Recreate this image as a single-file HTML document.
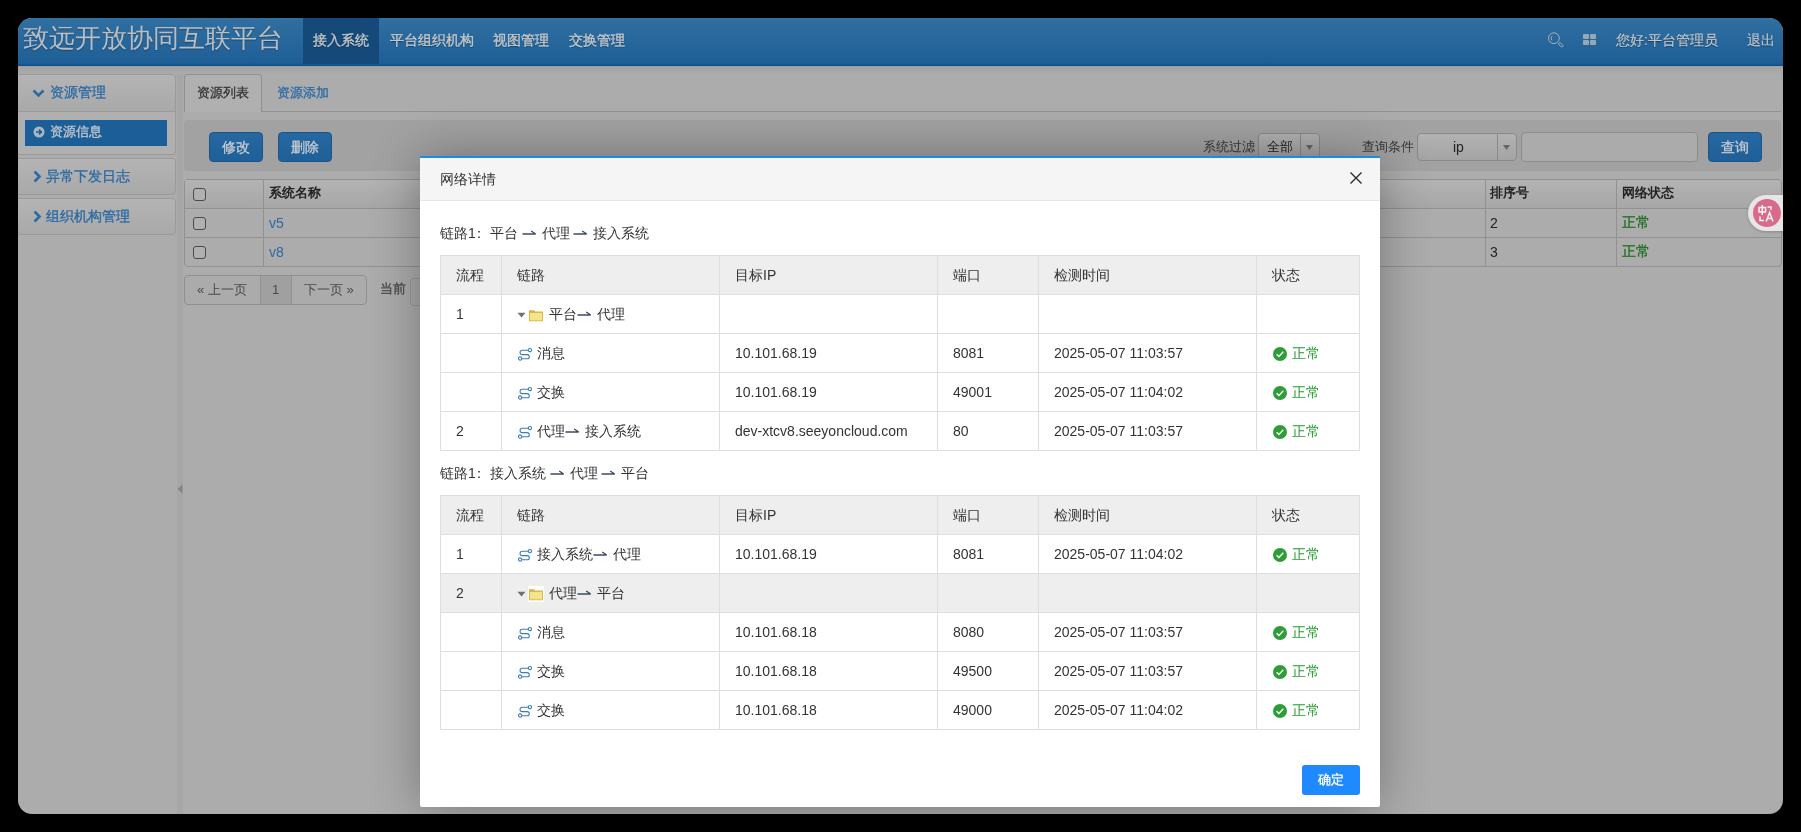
<!DOCTYPE html><html><head><meta charset="utf-8"><style>
*{box-sizing:border-box;margin:0;padding:0}
html,body{width:1801px;height:832px;overflow:hidden;background:#000;font-family:"Liberation Sans",sans-serif;}
.win{position:absolute;left:18px;top:18px;width:1765px;height:796px;border-radius:14px;overflow:hidden;background:#acacac}
.pg{position:absolute;left:-18px;top:-18px;width:1801px;height:832px;will-change:transform}
.a{position:absolute;white-space:nowrap}
.t14{font-size:14px;line-height:20px}
.t13{font-size:13px;line-height:20px}
.topbar{left:0;top:18px;width:1801px;height:48px;background:linear-gradient(#306fa0,#1e5f97 95%,#17558c);border-bottom:1px solid #0e4d86}
.title{left:23px;top:20px;font-size:26px;line-height:36px;color:#b9bdc2;text-shadow:0 1px 1px rgba(0,0,0,.3)}
.navact{left:303px;top:18px;width:76px;height:46px;background:#14497a}
.nav{top:30px;color:#c3c7cb;text-shadow:0 1px 1px rgba(0,0,0,.4);-webkit-text-stroke:0.35px #c3c7cb}
.sb{-webkit-text-stroke:0.3px currentColor}
.panel{left:8px;width:168px;border:1px solid #9b9b9b;border-radius:4px;background:#b0b0b0}
.phead{background:linear-gradient(#b4b4b4,#a9a9a9)}
.blue{color:#2a6aa5}
.btn{border:1px solid #1b5688;border-radius:4px;background:linear-gradient(#2668a2,#205f97);color:#c8ccd0;text-align:center;-webkit-text-stroke:0.3px #c8ccd0}
.sel{border:1px solid #8a8a8a;border-radius:4px;background:linear-gradient(#b2b2b2,#a4a4a4)}
.mt{color:#333}
.line{position:absolute;background:#dedede}
</style></head><body>
<div class="win"><div class="pg">
<div class="a topbar"></div>
<div class="a title">致远开放协同互联平台</div>
<div class="a navact"></div>
<div class="a nav t14" style="left:313px">接入系统</div>
<div class="a nav t14" style="left:390px">平台组织机构</div>
<div class="a nav t14" style="left:493px">视图管理</div>
<div class="a nav t14" style="left:569px">交换管理</div>
<svg class="a" style="left:1547px;top:32px" width="17" height="16" viewBox="0 0 17 16"><g fill="none" stroke="#a3b0ba" stroke-width="1"><circle cx="6.9" cy="6.2" r="5.4"/><path d="M5 4.2A3 3 0 0 0 5 8.4" /><rect x="11.2" y="11.6" width="5.2" height="2.4" rx="1.2" transform="rotate(42 13.8 12.8)" stroke-width="0.9"/></g></svg>
<svg class="a" style="left:1583px;top:34px" width="14" height="12" viewBox="0 0 14 12"><g fill="#97a7b3"><rect x="0" y="0" width="6" height="5" rx="1"/><rect x="7" y="0" width="6" height="5" rx="1"/><rect x="0" y="6" width="6" height="5" rx="1"/><rect x="7" y="6" width="6" height="5" rx="1"/></g></svg>
<div class="a nav t14" style="left:1616px;-webkit-text-stroke:0.15px #c3c7cb">您好:平台管理员</div>
<div class="a nav t14" style="left:1747px;-webkit-text-stroke:0.15px #c3c7cb">退出</div>
<div class="a" style="left:0;top:66px;width:1801px;height:8px;background:linear-gradient(rgba(0,0,0,.06),rgba(0,0,0,0))"></div>
<div class="a panel" style="top:74px;height:81px"><div class="phead" style="height:37px;border-bottom:1px solid #9b9b9b;border-radius:4px 4px 0 0"></div></div>
<svg class="a" style="left:32px;top:89px" width="13" height="9" viewBox="0 0 13 9"><path d="M1.5 1.5l5 5 5-5" fill="none" stroke="#2a6aa5" stroke-width="2.6"/></svg>
<div class="a t14 blue sb" style="left:50px;top:82px">资源管理</div>
<div class="a" style="left:25px;top:120px;width:142px;height:26px;background:#1c5f98"></div>
<svg class="a" style="left:33px;top:126px" width="12" height="12" viewBox="0 0 12 12"><circle cx="6" cy="6" r="5.5" fill="#a9b6c2"/><path d="M3 6h5M6 3.6L8.4 6 6 8.4" fill="none" stroke="#1c5f98" stroke-width="1.6"/></svg>
<div class="a t13 sb" style="left:50px;top:122px;color:#c3c8cc">资源信息</div>
<div class="a panel phead" style="top:158px;height:37px"></div>
<svg class="a" style="left:33px;top:170px" width="9" height="13" viewBox="0 0 9 13"><path d="M1.5 1.5l5 5-5 5" fill="none" stroke="#2a6aa5" stroke-width="2.6"/></svg>
<div class="a t14 blue sb" style="left:46px;top:166px">异常下发日志</div>
<div class="a panel phead" style="top:198px;height:37px"></div>
<svg class="a" style="left:33px;top:210px" width="9" height="13" viewBox="0 0 9 13"><path d="M1.5 1.5l5 5-5 5" fill="none" stroke="#2a6aa5" stroke-width="2.6"/></svg>
<div class="a t14 blue sb" style="left:46px;top:206px">组织机构管理</div>
<div class="a" style="left:177px;top:74px;width:6px;height:758px;background:#a6a6a6"></div>
<svg class="a" style="left:177px;top:484px" width="6" height="10" viewBox="0 0 6 10"><path d="M5.5 0.5v9L0.5 5z" fill="#838383"/></svg>
<div class="a" style="left:184px;top:111px;width:1597px;height:1px;background:#919191"></div>
<div class="a" style="left:184px;top:74px;width:78px;height:38px;border:1px solid #919191;border-bottom:none;border-radius:4px 4px 0 0;background:#b0b0b0"></div>
<div class="a t13 sb" style="left:197px;top:83px;color:#333">资源列表</div>
<div class="a t13 blue sb" style="left:277px;top:83px">资源添加</div>
<div class="a" style="left:184px;top:120px;width:1597px;height:51px;background:#a2a2a2;border-radius:4px"></div>
<div class="a btn t14" style="left:209px;top:132px;width:54px;height:30px;padding-top:4px">修改</div>
<div class="a btn t14" style="left:278px;top:132px;width:54px;height:30px;padding-top:4px">删除</div>
<div class="a t13" style="left:1203px;top:137px;color:#383838">系统过滤</div>
<div class="a sel" style="left:1258px;top:133px;width:62px;height:28px"></div>
<div class="a" style="left:1300px;top:134px;width:1px;height:26px;background:#8a8a8a"></div>
<div class="a t13" style="left:1267px;top:137px;color:#222">全部</div>
<svg class="a" style="left:1306px;top:145px" width="7" height="5" viewBox="0 0 7 5"><path d="M0 0h7L3.5 5z" fill="#666"/></svg>
<div class="a t13" style="left:1362px;top:137px;color:#383838">查询条件</div>
<div class="a sel" style="left:1417px;top:133px;width:100px;height:28px"></div>
<div class="a" style="left:1497px;top:134px;width:1px;height:26px;background:#8a8a8a"></div>
<div class="a t14" style="left:1453px;top:137px;color:#222">ip</div>
<svg class="a" style="left:1503px;top:145px" width="7" height="5" viewBox="0 0 7 5"><path d="M0 0h7L3.5 5z" fill="#666"/></svg>
<div class="a" style="left:1521px;top:132px;width:177px;height:30px;border:1px solid #8c8c8c;border-radius:4px;background:#ababab"></div>
<div class="a btn t14" style="left:1708px;top:132px;width:54px;height:30px;padding-top:4px">查询</div>
<div class="a" style="left:184px;top:179px;width:1598px;height:88px;border:1px solid #919191;border-radius:4px;background:#acacac;overflow:hidden"><div style="height:29px;background:linear-gradient(#b3b3b3,#a7a7a7);border-bottom:1px solid #919191"></div><div style="height:29px;border-bottom:1px solid #919191"></div></div>
<div class="a" style="left:263px;top:180px;width:1px;height:86px;background:#919191"></div>
<div class="a" style="left:1485px;top:180px;width:1px;height:86px;background:#919191"></div>
<div class="a" style="left:1616px;top:180px;width:1px;height:86px;background:#919191"></div>
<div class="a" style="left:193px;top:188px;width:13px;height:13px;border:1px solid #4a4a4a;border-radius:3px;background:#b0b0b0"></div>
<div class="a" style="left:193px;top:217px;width:13px;height:13px;border:1px solid #4a4a4a;border-radius:3px;background:#b0b0b0"></div>
<div class="a" style="left:193px;top:246px;width:13px;height:13px;border:1px solid #4a4a4a;border-radius:3px;background:#b0b0b0"></div>
<div class="a t13" style="left:269px;top:183px;color:#222;font-weight:bold">系统名称</div>
<div class="a t13" style="left:1490px;top:183px;color:#222;font-weight:bold">排序号</div>
<div class="a t13" style="left:1622px;top:183px;color:#222;font-weight:bold">网络状态</div>
<div class="a t14 blue" style="left:269px;top:213px">v5</div>
<div class="a t14 blue" style="left:269px;top:242px">v8</div>
<div class="a t14" style="left:1490px;top:213px;color:#222">2</div>
<div class="a t14" style="left:1490px;top:242px;color:#222">3</div>
<div class="a t14 sb" style="left:1622px;top:212px;color:#1f6e22">正常</div>
<div class="a t14 sb" style="left:1622px;top:241px;color:#1f6e22">正常</div>
<div class="a" style="left:184px;top:275px;width:183px;height:30px;border:1px solid #8f8f8f;border-radius:4px;background:#ababab;overflow:hidden"><div style="position:absolute;left:75px;top:0;width:32px;height:28px;background:#a0a0a0;border-left:1px solid #8f8f8f;border-right:1px solid #8f8f8f"></div></div>
<div class="a t13" style="left:197px;top:280px;color:#4a4a4a">« 上一页</div>
<div class="a t13" style="left:272px;top:280px;color:#4a4a4a">1</div>
<div class="a t13" style="left:304px;top:280px;color:#4a4a4a">下一页 »</div>
<div class="a t13 sb" style="left:380px;top:279px;color:#4a4a4a">当前</div>
<div class="a" style="left:410px;top:278px;width:60px;height:28px;border:1px solid #9a9a9a;border-radius:4px;background:#aaaaaa"></div>
<div class="a" style="left:1748px;top:195px;width:60px;height:36px;border-radius:18px;background:#e6e6e6;box-shadow:0 1px 3px rgba(0,0,0,.2)"></div>
<svg class="a" style="left:1753px;top:199px" width="28" height="28" viewBox="0 0 28 28"><circle cx="14" cy="14" r="14" fill="#d96a8b"/><g fill="none" stroke="#f4f4f4" stroke-width="1.5"><rect x="6" y="8.5" width="6.5" height="4.5"/><path d="M9.25 6v10M14.5 8h3.5v3M7 17.5v4h4M13.2 22.5l3.4-9 3.4 9M14.3 19.5h4.6"/></g></svg>
<div class="a" style="left:420px;top:156px;width:960px;height:651px;background:#fff;border-radius:2px;box-shadow:0 0 50px rgba(0,0,0,.33)"></div>
<div class="a" style="left:420px;top:156px;width:960px;height:2px;background:#1e8ae6"></div>
<div class="a" style="left:420px;top:158px;width:960px;height:43px;background:#f5f5f5;border-bottom:1px solid #e6e6e6"></div>
<div class="a t14" style="left:440px;top:169px;color:#333">网络详情</div>
<svg class="a" style="left:1350px;top:172px" width="12" height="12" viewBox="0 0 12 12"><path d="M0.5 0.5l11 11M11.5 0.5l-11 11" stroke="#2a2a2a" stroke-width="1.35"/></svg>
<div class="a t14 mt" style="left:440px;top:223px">链路1<span style="position:relative;left:-3.5px">：</span>平台 <svg width="15" height="8" viewBox="0 0 15 8" style="vertical-align:2px;margin-right:1px"><path d="M0.5 6h13.2M9.2 3l4.5 3" fill="none" stroke="#3c4b61" stroke-width="1.4"/></svg> 代理 <svg width="15" height="8" viewBox="0 0 15 8" style="vertical-align:2px;margin-right:1px"><path d="M0.5 6h13.2M9.2 3l4.5 3" fill="none" stroke="#3c4b61" stroke-width="1.4"/></svg> 接入系统</div>
<div class="a" style="left:441px;top:256px;width:918px;height:38px;background:#eeeeee"></div>
<div class="line" style="left:440px;top:255px;width:920px;height:1px"></div>
<div class="line" style="left:440px;top:294px;width:920px;height:1px"></div>
<div class="line" style="left:440px;top:333px;width:920px;height:1px"></div>
<div class="line" style="left:440px;top:372px;width:920px;height:1px"></div>
<div class="line" style="left:440px;top:411px;width:920px;height:1px"></div>
<div class="line" style="left:440px;top:450px;width:920px;height:1px"></div>
<div class="line" style="left:440px;top:255px;width:1px;height:196px"></div>
<div class="line" style="left:501px;top:255px;width:1px;height:196px"></div>
<div class="line" style="left:719px;top:255px;width:1px;height:196px"></div>
<div class="line" style="left:937px;top:255px;width:1px;height:196px"></div>
<div class="line" style="left:1038px;top:255px;width:1px;height:196px"></div>
<div class="line" style="left:1256px;top:255px;width:1px;height:196px"></div>
<div class="line" style="left:1359px;top:255px;width:1px;height:196px"></div>
<div class="a t14 mt" style="left:456px;top:265px">流程</div>
<div class="a t14 mt" style="left:517px;top:265px">链路</div>
<div class="a t14 mt" style="left:735px;top:265px">目标IP</div>
<div class="a t14 mt" style="left:953px;top:265px">端口</div>
<div class="a t14 mt" style="left:1054px;top:265px">检测时间</div>
<div class="a t14 mt" style="left:1272px;top:265px">状态</div>
<div class="a t14 mt" style="left:456px;top:304px">1</div>
<div class="a" style="left:517px;top:312px;line-height:0"><svg width="9" height="6" viewBox="0 0 9 6"><path d="M0.5 0.8h8l-4 4.8z" fill="#6b7079"/></svg></div>
<div class="a" style="left:528px;top:307px;line-height:0"><svg width="16" height="16" viewBox="0 0 16 16" style="background:#fff"><path d="M1 3.2h5l1.2 1.2H15V14.2H1z" fill="#dab446"/><rect x="1.9" y="5.9" width="12.2" height="7.5" fill="#f6e48b"/></svg></div>
<div class="a t14 mt" style="left:549px;top:304px">平台<svg width="15" height="8" viewBox="0 0 15 8" style="vertical-align:2px;margin-right:1px"><path d="M0.5 6h13.2M9.2 3l4.5 3" fill="none" stroke="#3c4b61" stroke-width="1.4"/></svg> 代理</div>
<div class="a" style="left:517px;top:347px;line-height:0"><svg width="16" height="14" viewBox="0 0 16 14"><g fill="none" stroke="#3d7bb6" stroke-width="1.05"><circle cx="12.9" cy="3.1" r="1.65"/><circle cx="3.1" cy="11.5" r="1.65"/><path d="M11.25 3.3H5.2A2.15 2.15 0 0 0 5.2 7.6H10.2A2.1 2.1 0 0 1 10.2 11.8H4.75"/></g></svg></div>
<div class="a t14 mt" style="left:537px;top:343px">消息</div>
<div class="a t14 mt" style="left:735px;top:343px">10.101.68.19</div>
<div class="a t14 mt" style="left:953px;top:343px">8081</div>
<div class="a t14 mt" style="left:1054px;top:343px">2025-05-07 11:03:57</div>
<div class="a" style="left:1273px;top:347px;line-height:0"><svg width="14" height="14" viewBox="0 0 14 14"><circle cx="7" cy="7" r="7" fill="#2f9d37"/><path d="M3.6 7.2l2.3 2.2 4.4-4.6" fill="none" stroke="#fff" stroke-width="1.4"/></svg></div>
<div class="a t14" style="left:1292px;top:343px;color:#249a2f">正常</div>
<div class="a" style="left:517px;top:386px;line-height:0"><svg width="16" height="14" viewBox="0 0 16 14"><g fill="none" stroke="#3d7bb6" stroke-width="1.05"><circle cx="12.9" cy="3.1" r="1.65"/><circle cx="3.1" cy="11.5" r="1.65"/><path d="M11.25 3.3H5.2A2.15 2.15 0 0 0 5.2 7.6H10.2A2.1 2.1 0 0 1 10.2 11.8H4.75"/></g></svg></div>
<div class="a t14 mt" style="left:537px;top:382px">交换</div>
<div class="a t14 mt" style="left:735px;top:382px">10.101.68.19</div>
<div class="a t14 mt" style="left:953px;top:382px">49001</div>
<div class="a t14 mt" style="left:1054px;top:382px">2025-05-07 11:04:02</div>
<div class="a" style="left:1273px;top:386px;line-height:0"><svg width="14" height="14" viewBox="0 0 14 14"><circle cx="7" cy="7" r="7" fill="#2f9d37"/><path d="M3.6 7.2l2.3 2.2 4.4-4.6" fill="none" stroke="#fff" stroke-width="1.4"/></svg></div>
<div class="a t14" style="left:1292px;top:382px;color:#249a2f">正常</div>
<div class="a t14 mt" style="left:456px;top:421px">2</div>
<div class="a" style="left:517px;top:425px;line-height:0"><svg width="16" height="14" viewBox="0 0 16 14"><g fill="none" stroke="#3d7bb6" stroke-width="1.05"><circle cx="12.9" cy="3.1" r="1.65"/><circle cx="3.1" cy="11.5" r="1.65"/><path d="M11.25 3.3H5.2A2.15 2.15 0 0 0 5.2 7.6H10.2A2.1 2.1 0 0 1 10.2 11.8H4.75"/></g></svg></div>
<div class="a t14 mt" style="left:537px;top:421px">代理<svg width="15" height="8" viewBox="0 0 15 8" style="vertical-align:2px;margin-right:1px"><path d="M0.5 6h13.2M9.2 3l4.5 3" fill="none" stroke="#3c4b61" stroke-width="1.4"/></svg> 接入系统</div>
<div class="a t14 mt" style="left:735px;top:421px">dev-xtcv8.seeyoncloud.com</div>
<div class="a t14 mt" style="left:953px;top:421px">80</div>
<div class="a t14 mt" style="left:1054px;top:421px">2025-05-07 11:03:57</div>
<div class="a" style="left:1273px;top:425px;line-height:0"><svg width="14" height="14" viewBox="0 0 14 14"><circle cx="7" cy="7" r="7" fill="#2f9d37"/><path d="M3.6 7.2l2.3 2.2 4.4-4.6" fill="none" stroke="#fff" stroke-width="1.4"/></svg></div>
<div class="a t14" style="left:1292px;top:421px;color:#249a2f">正常</div>
<div class="a t14 mt" style="left:440px;top:463px">链路1<span style="position:relative;left:-3.5px">：</span>接入系统 <svg width="15" height="8" viewBox="0 0 15 8" style="vertical-align:2px;margin-right:1px"><path d="M0.5 6h13.2M9.2 3l4.5 3" fill="none" stroke="#3c4b61" stroke-width="1.4"/></svg> 代理 <svg width="15" height="8" viewBox="0 0 15 8" style="vertical-align:2px;margin-right:1px"><path d="M0.5 6h13.2M9.2 3l4.5 3" fill="none" stroke="#3c4b61" stroke-width="1.4"/></svg> 平台</div>
<div class="a" style="left:441px;top:496px;width:918px;height:38px;background:#eeeeee"></div>
<div class="a" style="left:441px;top:574px;width:918px;height:38px;background:#eeeeee"></div>
<div class="line" style="left:440px;top:495px;width:920px;height:1px"></div>
<div class="line" style="left:440px;top:534px;width:920px;height:1px"></div>
<div class="line" style="left:440px;top:573px;width:920px;height:1px"></div>
<div class="line" style="left:440px;top:612px;width:920px;height:1px"></div>
<div class="line" style="left:440px;top:651px;width:920px;height:1px"></div>
<div class="line" style="left:440px;top:690px;width:920px;height:1px"></div>
<div class="line" style="left:440px;top:729px;width:920px;height:1px"></div>
<div class="line" style="left:440px;top:495px;width:1px;height:235px"></div>
<div class="line" style="left:501px;top:495px;width:1px;height:235px"></div>
<div class="line" style="left:719px;top:495px;width:1px;height:235px"></div>
<div class="line" style="left:937px;top:495px;width:1px;height:235px"></div>
<div class="line" style="left:1038px;top:495px;width:1px;height:235px"></div>
<div class="line" style="left:1256px;top:495px;width:1px;height:235px"></div>
<div class="line" style="left:1359px;top:495px;width:1px;height:235px"></div>
<div class="a t14 mt" style="left:456px;top:505px">流程</div>
<div class="a t14 mt" style="left:517px;top:505px">链路</div>
<div class="a t14 mt" style="left:735px;top:505px">目标IP</div>
<div class="a t14 mt" style="left:953px;top:505px">端口</div>
<div class="a t14 mt" style="left:1054px;top:505px">检测时间</div>
<div class="a t14 mt" style="left:1272px;top:505px">状态</div>
<div class="a t14 mt" style="left:456px;top:544px">1</div>
<div class="a" style="left:517px;top:548px;line-height:0"><svg width="16" height="14" viewBox="0 0 16 14"><g fill="none" stroke="#3d7bb6" stroke-width="1.05"><circle cx="12.9" cy="3.1" r="1.65"/><circle cx="3.1" cy="11.5" r="1.65"/><path d="M11.25 3.3H5.2A2.15 2.15 0 0 0 5.2 7.6H10.2A2.1 2.1 0 0 1 10.2 11.8H4.75"/></g></svg></div>
<div class="a t14 mt" style="left:537px;top:544px">接入系统<svg width="15" height="8" viewBox="0 0 15 8" style="vertical-align:2px;margin-right:1px"><path d="M0.5 6h13.2M9.2 3l4.5 3" fill="none" stroke="#3c4b61" stroke-width="1.4"/></svg> 代理</div>
<div class="a t14 mt" style="left:735px;top:544px">10.101.68.19</div>
<div class="a t14 mt" style="left:953px;top:544px">8081</div>
<div class="a t14 mt" style="left:1054px;top:544px">2025-05-07 11:04:02</div>
<div class="a" style="left:1273px;top:548px;line-height:0"><svg width="14" height="14" viewBox="0 0 14 14"><circle cx="7" cy="7" r="7" fill="#2f9d37"/><path d="M3.6 7.2l2.3 2.2 4.4-4.6" fill="none" stroke="#fff" stroke-width="1.4"/></svg></div>
<div class="a t14" style="left:1292px;top:544px;color:#249a2f">正常</div>
<div class="a t14 mt" style="left:456px;top:583px">2</div>
<div class="a" style="left:517px;top:591px;line-height:0"><svg width="9" height="6" viewBox="0 0 9 6"><path d="M0.5 0.8h8l-4 4.8z" fill="#6b7079"/></svg></div>
<div class="a" style="left:528px;top:586px;line-height:0"><svg width="16" height="16" viewBox="0 0 16 16" style="background:#fff"><path d="M1 3.2h5l1.2 1.2H15V14.2H1z" fill="#dab446"/><rect x="1.9" y="5.9" width="12.2" height="7.5" fill="#f6e48b"/></svg></div>
<div class="a t14 mt" style="left:549px;top:583px">代理<svg width="15" height="8" viewBox="0 0 15 8" style="vertical-align:2px;margin-right:1px"><path d="M0.5 6h13.2M9.2 3l4.5 3" fill="none" stroke="#3c4b61" stroke-width="1.4"/></svg> 平台</div>
<div class="a" style="left:517px;top:626px;line-height:0"><svg width="16" height="14" viewBox="0 0 16 14"><g fill="none" stroke="#3d7bb6" stroke-width="1.05"><circle cx="12.9" cy="3.1" r="1.65"/><circle cx="3.1" cy="11.5" r="1.65"/><path d="M11.25 3.3H5.2A2.15 2.15 0 0 0 5.2 7.6H10.2A2.1 2.1 0 0 1 10.2 11.8H4.75"/></g></svg></div>
<div class="a t14 mt" style="left:537px;top:622px">消息</div>
<div class="a t14 mt" style="left:735px;top:622px">10.101.68.18</div>
<div class="a t14 mt" style="left:953px;top:622px">8080</div>
<div class="a t14 mt" style="left:1054px;top:622px">2025-05-07 11:03:57</div>
<div class="a" style="left:1273px;top:626px;line-height:0"><svg width="14" height="14" viewBox="0 0 14 14"><circle cx="7" cy="7" r="7" fill="#2f9d37"/><path d="M3.6 7.2l2.3 2.2 4.4-4.6" fill="none" stroke="#fff" stroke-width="1.4"/></svg></div>
<div class="a t14" style="left:1292px;top:622px;color:#249a2f">正常</div>
<div class="a" style="left:517px;top:665px;line-height:0"><svg width="16" height="14" viewBox="0 0 16 14"><g fill="none" stroke="#3d7bb6" stroke-width="1.05"><circle cx="12.9" cy="3.1" r="1.65"/><circle cx="3.1" cy="11.5" r="1.65"/><path d="M11.25 3.3H5.2A2.15 2.15 0 0 0 5.2 7.6H10.2A2.1 2.1 0 0 1 10.2 11.8H4.75"/></g></svg></div>
<div class="a t14 mt" style="left:537px;top:661px">交换</div>
<div class="a t14 mt" style="left:735px;top:661px">10.101.68.18</div>
<div class="a t14 mt" style="left:953px;top:661px">49500</div>
<div class="a t14 mt" style="left:1054px;top:661px">2025-05-07 11:03:57</div>
<div class="a" style="left:1273px;top:665px;line-height:0"><svg width="14" height="14" viewBox="0 0 14 14"><circle cx="7" cy="7" r="7" fill="#2f9d37"/><path d="M3.6 7.2l2.3 2.2 4.4-4.6" fill="none" stroke="#fff" stroke-width="1.4"/></svg></div>
<div class="a t14" style="left:1292px;top:661px;color:#249a2f">正常</div>
<div class="a" style="left:517px;top:704px;line-height:0"><svg width="16" height="14" viewBox="0 0 16 14"><g fill="none" stroke="#3d7bb6" stroke-width="1.05"><circle cx="12.9" cy="3.1" r="1.65"/><circle cx="3.1" cy="11.5" r="1.65"/><path d="M11.25 3.3H5.2A2.15 2.15 0 0 0 5.2 7.6H10.2A2.1 2.1 0 0 1 10.2 11.8H4.75"/></g></svg></div>
<div class="a t14 mt" style="left:537px;top:700px">交换</div>
<div class="a t14 mt" style="left:735px;top:700px">10.101.68.18</div>
<div class="a t14 mt" style="left:953px;top:700px">49000</div>
<div class="a t14 mt" style="left:1054px;top:700px">2025-05-07 11:04:02</div>
<div class="a" style="left:1273px;top:704px;line-height:0"><svg width="14" height="14" viewBox="0 0 14 14"><circle cx="7" cy="7" r="7" fill="#2f9d37"/><path d="M3.6 7.2l2.3 2.2 4.4-4.6" fill="none" stroke="#fff" stroke-width="1.4"/></svg></div>
<div class="a t14" style="left:1292px;top:700px;color:#249a2f">正常</div>
<div class="a t13" style="left:1302px;top:765px;width:58px;height:30px;background:#1f8aff;border-radius:3px;color:#fff;text-align:center;padding-top:5px;-webkit-text-stroke:0.3px #fff">确定</div>
</div></div></body></html>
